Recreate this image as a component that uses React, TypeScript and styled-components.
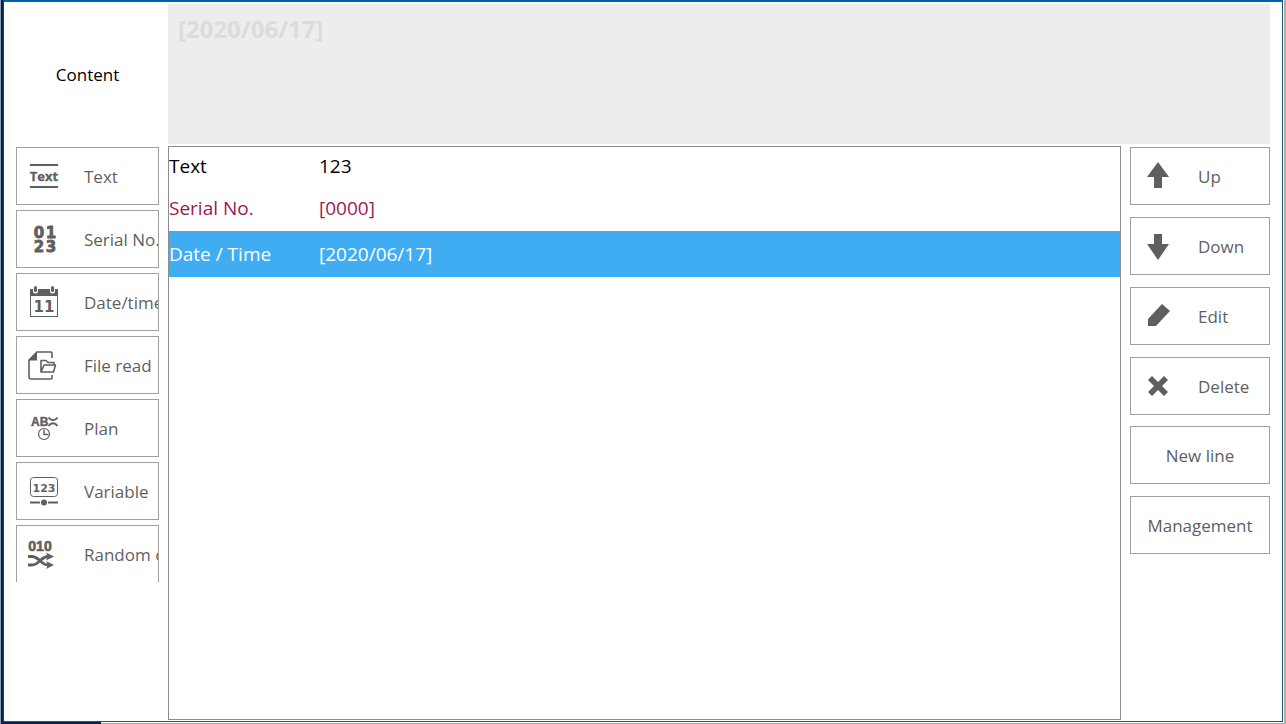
import React from "react";
import styled, { createGlobalStyle, css } from "styled-components";

const ink = "#5f5f5f";
const line = "#a0a0a0";

const GlobalStyle = createGlobalStyle`
  * { box-sizing: border-box; }
  body {
    margin: 0;
    font-family: "Open Sans", "Noto Sans", sans-serif;
    font-size: 17px;
    line-height: 24px;
    color: #000;
  }
`;

const Desktop = styled.div`
  display: flex;
  min-height: 100vh;
  padding: 0 3px 2px;
  background:
    linear-gradient(#06204c, #06204c) 1px 100% / 100px 2px no-repeat,
    linear-gradient(#8c9db8, #8c9db8) 0 0 / 1px 100% no-repeat,
    linear-gradient(#06204c, #06204c) 1px 0 / 2px 100% no-repeat,
    linear-gradient(#a9b3a6, #a9b3a6) 100% 0 / 2px 100% no-repeat,
    linear-gradient(#a3adc4, #a3adc4) 0 100% / 100% 1px no-repeat,
    #f4fafa;
`;

const Window = styled.main`
  flex: 1;
  min-width: 0;
  display: grid;
  grid-template-columns: 143px minmax(0, 1fr) 140px;
  grid-template-rows: 140px 1fr;
  column-gap: 9px;
  row-gap: 2px;
  padding: 2px 12px 1px;
  background: #fff;
  border: 1px solid #1c587e;
  border-top: 2px solid #0063a7;
  border-left-color: #003f9b;
`;

const Title = styled.h1`
  margin: 0;
  padding-top: 2px;
  display: flex;
  align-items: center;
  justify-content: center;
  font-size: 17px;
  font-weight: 400;
`;

const Preview = styled.section`
  grid-column: 2 / -1;
  padding: 9px 10px;
  background: #ededed;
  color: #dcdcdc;
  font-size: 24px;
  line-height: 32px;
  font-weight: 700;
`;

const Palette = styled.nav`
  display: flex;
  flex-direction: column;
  gap: 5px;
  height: 436px;
  padding-top: 1px;
  overflow: hidden;
`;

const Actions = styled.aside`
  display: flex;
  flex-direction: column;
  gap: 11px;
  padding-top: 1px;
`;

const ActionGroup = styled.div`
  display: flex;
  flex-direction: column;
  gap: 12px;
`;

const Button = styled.button<{ $centered?: boolean }>`
  flex: none;
  display: flex;
  align-items: center;
  justify-content: ${(p) => (p.$centered ? "center" : "flex-start")};
  gap: 24px;
  height: 58px;
  padding: 2px ${(p) => (p.$centered ? "0" : "11px")} 0;
  border: 1px solid ${line};
  border-radius: 0;
  background: #fff;
  color: ${ink};
  font: inherit;
  white-space: nowrap;
  overflow: hidden;
  cursor: pointer;
`;

const Icon = styled.svg`
  flex: none;
  width: 32px;
  height: 36px;
  fill: ${ink};
`;

const ListPanel = styled.section`
  border: 1px solid #8c8c8c;
  overflow: hidden;
`;

const Table = styled.table`
  width: 100%;
  table-layout: fixed;
  border-collapse: collapse;
  font-size: 19px;
  line-height: 26px;
`;

const Row = styled.tr<{ $tone: string; $selected?: boolean }>`
  height: 42px;
  color: ${(p) => p.$tone};
  ${(p) =>
    p.$selected &&
    css`
      height: 46px;
      background: #40adf2;
    `}
`;

const Cell = styled.td<{ $selected?: boolean }>`
  padding: 0 0 ${(p) => (p.$selected ? "0" : "4px")};
  white-space: nowrap;
`;

const NameColumn = styled.col`
  width: 150px;
`;

const sans = "Liberation Sans, sans-serif";
const wide = "DejaVu Sans, sans-serif";

/* Every icon is drawn on a 32 x 36 board, centred on 16, 18. */
const icons: Record<string, React.ReactNode> = {
  text: (
    <>
      <rect x="2" y="5" width="28" height="2" />
      <rect x="2" y="27" width="28" height="2" />
      <text x="16" y="22" fontFamily="Open Sans, sans-serif" fontWeight="700" fontSize="13" textAnchor="middle" stroke={ink} strokeWidth="0.3">Text</text>
    </>
  ),
  serial: (
    <g fontFamily={wide} fontWeight="700" fontSize="15" textAnchor="middle" stroke={ink} strokeWidth="0.8">
      <text x="11" y="16">0</text>
      <text x="23" y="16">1</text>
      <text x="11" y="30">2</text>
      <text x="23" y="30">3</text>
    </g>
  ),
  date: (
    <>
      <path d="M2 4h3v2a2.5 2.5 0 0 0 5 0V4h12v2a2.5 2.5 0 0 0 5 0V4h3v28H2zM3 11v20h26V11z" fillRule="evenodd" />
      <rect x="6" y="1" width="3" height="6" rx="1.5" />
      <rect x="23" y="1" width="3" height="6" rx="1.5" />
      <text x="16" y="27" fontFamily={wide} fontWeight="700" fontSize="15" textAnchor="middle">11</text>
    </>
  ),
  file: (
    <>
      <path d="M24 10V5q0-1-1-1H9L1 12v17q0 2 2 2h20q1 0 1-1v-3" fill="none" stroke={ink} strokeWidth="1.6" />
      <path d="M9 3.5v9H0.5z" />
      <path d="M13 24V12.5h5l2 2h6V17M13 24l3-7h11.5l-2 7z" fill="none" stroke={ink} strokeWidth="1.6" strokeLinejoin="round" />
    </>
  ),
  plan: (
    <>
      <text x="3" y="15" fontFamily={sans} fontWeight="700" fontSize="12" stroke={ink} strokeWidth="0.4">AB</text>
      <path d="M20.500 6.500q2 2.800 4.500 2.800t4.500-2.800M20.500 15q2-2.800 4.500-2.800t4.500 2.800" fill="none" stroke={ink} strokeWidth="2" />
      <circle cx="16" cy="23" r="5.5" fill="none" stroke={ink} strokeWidth="1.2" />
      <path d="M16 18.5V23.5h4.5" fill="none" stroke={ink} strokeWidth="1.4" />
    </>
  ),
  variable: (
    <>
      <rect x="2.5" y="3.5" width="27" height="19" rx="3" fill="none" stroke={ink} />
      <text x="16" y="18" fontFamily={wide} fontWeight="700" fontSize="11" textAnchor="middle">123</text>
      <path d="M2 27.500h10v2H2zM20 27.500h10v2H20z" />
      <circle cx="16" cy="28.5" r="3" />
    </>
  ),
  random: (
    <>
      <text x="12" y="14" fontFamily={sans} fontWeight="700" fontSize="14" textAnchor="middle" stroke={ink} strokeWidth="0.6">010</text>
      <path d="M0 19.500h4c7 0 9 8.500 16 8.500h2M0 28h4c7 0 9-8.500 16-8.500h2" fill="none" stroke={ink} strokeWidth="2.8" />
      <path d="M18 15.500l8 4-8 4 2-4zM18 24l8 4-8 4 2-4z" />
    </>
  ),
  up: <path d="M16 3l11 15h-7v11h-8V18H5z" />,
  down: <path d="M12 5h8v10h7L16 31 5 15h7z" />,
  edit: <path d="M6 27v-7L20 5l8 7-14 15z" />,
  remove: <path d="M10 7l6 6 6-6 4 4-6 6 6 6-4 4-6-6-6 6-4-4 6-6-6-6z" />,
};

const tools = [
  ["text", "Text"],
  ["serial", "Serial No."],
  ["date", "Date/time"],
  ["file", "File read"],
  ["plan", "Plan"],
  ["variable", "Variable"],
  ["random", "Random code"],
];

const rowActions = [
  ["up", "Up"],
  ["down", "Down"],
  ["edit", "Edit"],
  ["remove", "Delete"],
];

const entries = [
  { name: "Text", value: "123", tone: "#000" },
  { name: "Serial No.", value: "[0000]", tone: "#9c1758" },
  { name: "Date / Time", value: "[2020/06/17]", tone: "#fff", selected: true },
];

function IconButton({ icon, label }: { icon: string; label: string }) {
  return (
    <Button type="button">
      <Icon viewBox="0 0 32 36" aria-hidden="true">{icons[icon]}</Icon>
      {label}
    </Button>
  );
}

export default function App() {
  return (
    <>
      <GlobalStyle />
      <Desktop>
        <Window>
          <Title>Content</Title>
          <Preview>[2020/06/17]</Preview>
          <Palette>
            {tools.map(([icon, label]) => (
              <IconButton key={icon} icon={icon} label={label} />
            ))}
          </Palette>
          <ListPanel>
            <Table>
              <colgroup>
                <NameColumn />
                <col />
              </colgroup>
              <tbody>
                {entries.map((e) => (
                  <Row key={e.name} $tone={e.tone} $selected={e.selected}>
                    <Cell $selected={e.selected}>{e.name}</Cell>
                    <Cell $selected={e.selected}>{e.value}</Cell>
                  </Row>
                ))}
              </tbody>
            </Table>
          </ListPanel>
          <Actions>
            <ActionGroup>
              {rowActions.map(([icon, label]) => (
                <IconButton key={icon} icon={icon} label={label} />
              ))}
            </ActionGroup>
            <ActionGroup>
              <Button type="button" $centered>New line</Button>
              <Button type="button" $centered>Management</Button>
            </ActionGroup>
          </Actions>
        </Window>
      </Desktop>
    </>
  );
}
